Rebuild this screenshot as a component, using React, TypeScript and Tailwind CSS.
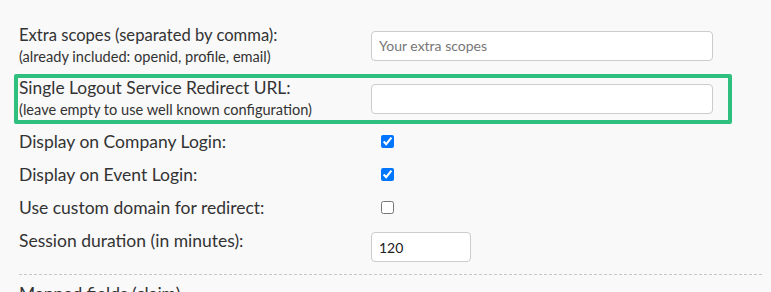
import React from 'react';

const font = { fontFamily: 'Lato, "Open Sans", sans-serif' };

const CheckRow = ({ label, checked }: { label: string; checked: boolean }) => (
  <div className="flex h-[33px] items-center">
    <label className="w-[351px] shrink-0 text-[17.5px] leading-[33px]">{label}</label>
    <input type="checkbox" defaultChecked={checked} className="m-0 ml-[11px] h-[13px] w-[13px]" />
  </div>
);

export default function App() {
  return (
    <div style={font} className="h-[292px] w-[771px] overflow-hidden bg-[#f9f9f9] pl-[19px] pr-[9px] pt-[23px] text-[#333]">
      <div className="flex h-[45px] items-center">
        <div className="w-[352px] shrink-0">
          <div className="text-[16.6px] leading-[22px]">Extra scopes (separated by comma):</div>
          <div className="text-[14.6px] leading-[22px]">(already included: openid, profile, email)</div>
        </div>
        <input
          type="text"
          placeholder="Your extra scopes"
          className="h-[30px] w-[342px] rounded-[4px] border border-[#ccc] bg-white px-[7px] text-[14px] text-[#333] outline-none placeholder:text-[#777]"
        />
      </div>

      <div className="-ml-[5px] mt-[6px] flex h-[50px] w-[718px] items-center rounded-[2px] border-[4px] border-[#2fbf7e] pl-[1px]">
        <div className="w-[352px] shrink-0">
          <div className="text-[17.4px] leading-[22px]">Single Logout Service Redirect URL:</div>
          <div className="text-[14.6px] leading-[22px]">(leave empty to use well known configuration)</div>
        </div>
        <input
          type="text"
          className="h-[30px] w-[342px] rounded-[4px] border border-[#ccc] bg-white px-[7px] text-[14px] text-[#333] outline-none"
        />
      </div>

      <div className="mt-[1px]">
        <CheckRow label="Display on Company Login:" checked />
        <CheckRow label="Display on Event Login:" checked />
        <CheckRow label="Use custom domain for redirect:" checked={false} />
      </div>

      <div className="flex items-start">
        <label className="w-[352px] shrink-0 text-[17.5px] leading-[33px]">Session duration (in minutes):</label>
        <input
          type="text"
          defaultValue="120"
          className="mt-[8px] h-[30px] w-[100px] rounded-[4px] border border-[#ccc] bg-white px-[7px] text-[14px] text-[#222] outline-none"
        />
      </div>

      <div className="mt-[12px] border-t border-dashed border-[#c8c8c8]" />

      <div className="mt-[8px] text-[17.5px] leading-[22px]">Mapped fields (claim)</div>
    </div>
  );
}
